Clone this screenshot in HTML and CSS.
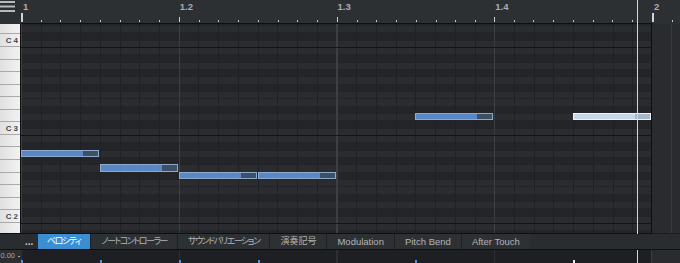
FILE: index.html
```html
<!DOCTYPE html>
<html lang="ja">
<head>
    <meta charset="UTF-8">
    <meta name="viewport" content="width=device-width, initial-scale=1.0">
    <title>Piano Roll</title>
    <link rel="stylesheet" href="styles.css">
</head>
<body>
    <div class="editor">
        <div class="ruler">
            <div class="ruler-corner">
                <svg width="16" height="13" viewBox="0 0 16 13">
                    <rect x="0" y="1" width="15" height="2" fill="#b6babe"/>
                    <rect x="0" y="5.5" width="15" height="2" fill="#b6babe"/>
                    <rect x="0" y="10" width="15" height="2" fill="#b6babe"/>
                </svg>
            </div>
            <div class="beat bar"><span>1</span></div>
            <div class="beat"><span>1.2</span></div>
            <div class="beat"><span>1.3</span></div>
            <div class="beat"><span>1.4</span></div>
            <div class="beat bar end"><span>2</span></div>
        </div>

        <div class="main">
            <div class="keyboard">
                <div class="key key-top"></div>
                <div class="key">C4</div>
                <div class="key"></div>
                <div class="key"></div>
                <div class="key"></div>
                <div class="key"></div>
                <div class="key"></div>
                <div class="key"></div>
                <div class="key">C3</div>
                <div class="key"></div>
                <div class="key"></div>
                <div class="key"></div>
                <div class="key"></div>
                <div class="key"></div>
                <div class="key"></div>
                <div class="key">C2</div>
                <div class="key key-bottom"></div>
            </div>
            <div class="grid" id="grid"></div>
            <div class="grid-tail"></div>
        </div>

        <div class="tabs">
            <div class="tab-more">...</div>
            <div class="tab kana active">ベロシティ</div>
            <div class="tab kana">ノートコントローラー</div>
            <div class="tab kana">サウンドバリエーション</div>
            <div class="tab kanji">演奏記号</div>
            <div class="tab">Modulation</div>
            <div class="tab">Pitch Bend</div>
            <div class="tab">After Touch</div>
        </div>

        <div class="velocity">
            <div class="vel-scale">0.00<span class="vel-dash"></span></div>
            <div class="vel-pane" id="velPane"></div>
            <div class="vel-tail"></div>
        </div>

        <div class="playhead"></div>
    </div>

    <script>
        const BEAT = 157.75;
        const STEP = BEAT / 8;
        const ROW = 88 / 12;
        const C3_BOTTOM = 111;

        // start / length in 32nd steps, pitch in semitones from C3
        const notes = [
            { start: 0, len: 4, pitch: -3 },
            { start: 4, len: 4, pitch: -5 },
            { start: 8, len: 4, pitch: -6 },
            { start: 12, len: 4, pitch: -6 },
            { start: 20, len: 4, pitch: 2 },
            { start: 28, len: 4, pitch: 2, selected: true }
        ];

        const grid = document.getElementById('grid');
        const velPane = document.getElementById('velPane');

        notes.forEach((n) => {
            const note = document.createElement('div');
            note.className = n.selected ? 'note selected' : 'note';
            note.style.left = (n.start * STEP) + 'px';
            note.style.width = (n.len * STEP - 1) + 'px';
            note.style.top = (C3_BOTTOM - (n.pitch + 1) * ROW) + 'px';
            grid.appendChild(note);

            const vel = document.createElement('div');
            vel.className = n.selected ? 'vel selected' : 'vel';
            vel.style.left = (n.start * STEP) + 'px';
            velPane.appendChild(vel);
        });
    </script>
</body>
</html>
```

FILE: styles.css
```css
* {
    box-sizing: border-box;
}

body {
    margin: 0;
    background-color: #2b2e31;
    font-family: "Liberation Sans", Arial, sans-serif;
    overflow: hidden;
}

.editor {
    position: relative;
    width: 680px;
    height: 263px;
    display: flex;
    flex-direction: column;
}

/* ruler */
.ruler {
    display: flex;
    height: 24px;
    flex: 0 0 24px;
    background-color: #2d3033;
}

.ruler-corner {
    width: 21px;
    flex: 0 0 21px;
}

.ruler-corner svg {
    display: block;
}

.beat {
    flex: 0 0 157.75px;
    height: 24px;
    border-bottom: 1px solid #0e0f10;
    background:
        linear-gradient(#c9ccd0, #c9ccd0) 0 17px / 1px 5px no-repeat,
        repeating-linear-gradient(to right, #bfc3c7 0 1px, transparent 1px 19.71875px) 0 20px / 100% 2px no-repeat;
}

.beat.bar {
    background:
        linear-gradient(#cfd2d6, #cfd2d6) 0 13px / 2px 9px no-repeat,
        repeating-linear-gradient(to right, #bfc3c7 0 1px, transparent 1px 19.71875px) 0 20px / 100% 2px no-repeat;
}

.beat.end {
    flex: 1;
    border-bottom: none;
}

.beat span {
    display: block;
    padding: 2px 0 0 1px;
    font-size: 9.5px;
    font-weight: bold;
    line-height: 10px;
    color: #a9adb2;
}

.beat.bar span {
    padding-left: 2px;
}

/* note area */
.main {
    display: flex;
    height: 210px;
    flex: 0 0 210px;
}

.keyboard {
    width: 21px;
    flex: 0 0 21px;
    display: flex;
    flex-direction: column;
    border-right: 1px solid #0e0f10;
    border-bottom: 1px solid #0e0f10;
    background-color: #e6e6e6;
    overflow: hidden;
}

.key {
    flex: 0 0 12.5714px;
    display: flex;
    align-items: center;
    justify-content: flex-end;
    padding-top: 1px;
    border-bottom: 1px solid #a9a9a9;
    background: linear-gradient(to right, #e0e0e0, #f2f2f2);
    font-size: 8px;
    font-weight: bold;
    letter-spacing: 2px;
    color: #474747;
    overflow: hidden;
}

.key.key-top {
    flex-basis: 10.43px;
}

.key.key-bottom {
    flex: 1;
    border-bottom: none;
}

.grid {
    position: relative;
    width: 631px;
    flex: 0 0 631px;
    border-right: 1px solid #0e0f10;
    border-bottom: 1px solid #0e0f10;
    background:
        linear-gradient(#131416 0 1px, transparent 1px) 0 23px / 100% 88px,
        repeating-linear-gradient(to right, #3c3f43 0 1px, transparent 1px 157.75px),
        repeating-linear-gradient(to right, #1f2124 0 1px, transparent 1px 19.71875px),
        repeating-linear-gradient(to bottom, #222427 0 1px, transparent 1px 7.3333px) 0 23px / 100% 88px,
        linear-gradient(to bottom,
            #2a2c2f 0 7.33px, #232528 7.33px 14.67px,
            #2a2c2f 14.67px 22px, #232528 22px 29.33px,
            #2a2c2f 29.33px 36.67px, #232528 36.67px 44px,
            #2a2c2f 44px 58.67px, #232528 58.67px 66px,
            #2a2c2f 66px 73.33px, #232528 73.33px 80.67px,
            #2a2c2f 80.67px 88px) 0 23px / 100% 88px;
}

.grid-tail {
    flex: 1;
    border-bottom: 1px solid #1b1c1e;
    background:
        linear-gradient(to right, transparent 19px, #37393c 19px 20px, transparent 20px),
        #292b2e;
}

.note {
    position: absolute;
    height: 7.3333px;
    border: 1px solid #8ea9cc;
    background: linear-gradient(to right, #5a87c5 80%, #3d5066 80%);
}

.note.selected {
    border-color: #eef2f7;
    background: linear-gradient(to right, #c8d6e8 80%, #a7b6c8 80%);
}

/* tab bar */
.tabs {
    position: relative;
    z-index: 2;
    display: flex;
    height: 16px;
    flex: 0 0 16px;
    padding-left: 24px;
    border-bottom: 1px solid #0e0f10;
    background-color: #2a2d30;
}

.tab-more {
    width: 14px;
    padding-left: 1px;
    font-size: 10px;
    font-weight: bold;
    line-height: 15px;
    color: #c3c7cb;
}

.tab {
    padding: 0 10px;
    border-left: 1px solid #1e2023;
    background-color: #2e3134;
    font-family: "Liberation Sans", "Noto Sans CJK JP", sans-serif;
    font-size: 9.5px;
    line-height: 15px;
    color: #b0b4b9;
    white-space: nowrap;
}

.tab.kana {
    font-size: 9px;
    font-feature-settings: "palt";
    letter-spacing: -1.5px;
}

.tab.kanji {
    font-size: 9px;
}

.tab.active {
    padding: 0 10px 0 9px;
    border-left: none;
    background-color: #3a8ed2;
    color: #ffffff;
}

/* velocity */
.velocity {
    display: flex;
    height: 13px;
    flex: 0 0 13px;
}

.vel-scale {
    width: 21px;
    flex: 0 0 21px;
    display: flex;
    align-items: flex-start;
    justify-content: flex-end;
    padding: 1px 1px 0 0;
    font-size: 7.5px;
    line-height: 9px;
    color: #a3a7ab;
    white-space: nowrap;
}

.vel-dash {
    width: 2px;
    height: 1px;
    margin: 5px 0 0 3px;
    background-color: #a3a7ab;
}

.vel-pane {
    position: relative;
    width: 631px;
    flex: 0 0 631px;
    border-right: 1px solid #3a3d40;
    background:
        repeating-linear-gradient(to right, #2c2f33 0 1px, transparent 1px 157.75px),
        #1d1f22;
}

.vel-tail {
    flex: 1;
    background-color: #292b2e;
}

.vel {
    position: absolute;
    bottom: 0;
    width: 2px;
    height: 3px;
    background-color: #5b8fd4;
}

.vel.selected {
    background-color: #e3e8ee;
}

.playhead {
    position: absolute;
    z-index: 1;
    left: 637px;
    top: 0;
    bottom: 0;
    width: 1px;
    background-color: #d3d6d9;
}
```
